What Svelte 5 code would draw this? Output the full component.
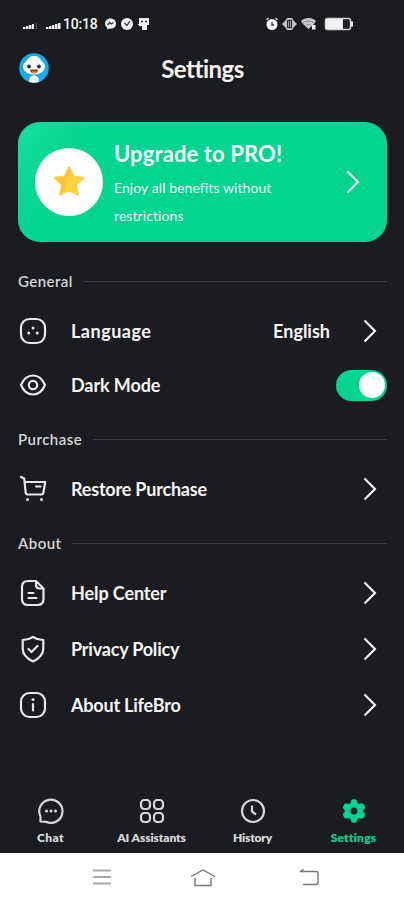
<script lang="ts">
  type Row = { label: string; icon: string; kind?: 'toggle'; value?: string };

  let darkMode = $state(true);
  let activeTab = $state('settings');

  const sections: { title: string; rows: Row[] }[] = [
    {
      title: 'General',
      rows: [
        { label: 'Language', icon: 'language', value: 'English' },
        { label: 'Dark Mode', icon: 'eye', kind: 'toggle' }
      ]
    },
    {
      title: 'Purchase',
      rows: [{ label: 'Restore Purchase', icon: 'cart' }]
    },
    {
      title: 'About',
      rows: [
        { label: 'Help Center', icon: 'document' },
        { label: 'Privacy Policy', icon: 'shield' },
        { label: 'About LifeBro', icon: 'info' }
      ]
    }
  ];

  const tabs = [
    { id: 'chat', label: 'Chat' },
    { id: 'assistants', label: 'AI Assistants' },
    { id: 'history', label: 'History' },
    { id: 'settings', label: 'Settings' }
  ];
</script>

{#snippet chevron()}
  <svg class="chevron" viewBox="0 0 14 24" width="14" height="24">
    <path d="M1.5 1.5 12 12 1.5 22.5" />
  </svg>
{/snippet}

<div class="screen">
  <div class="status">
    <svg class="signal" viewBox="0 0 40 10" width="40" height="10">
      <path d="M1 7V5h2.500v2zM4 7V4h2.500v3zM7 7V3h2.500v4zM10 7V2h2v5z" />
      <path class="dim" d="M14 7V1h1v6z" />
      <path d="M24 7V5h2.500v2zM27 7V4h2.500v3zM30 7V3h2.500v4zM33 7V2h2.500v5zM36 7V1h2.500v6z" />
    </svg>
    <span class="clock">10:18</span>
    <svg class="notices" viewBox="0 0 46 14" width="46" height="14">
      <path d="M6.500 1.500C3 1.500 1 4 1 6.500c0 2 .8 3.200 2 4v2l2-1c4.500.8 7-1.700 7-5 0-2.700-2.300-5-5.500-5z" />
      <path class="cut" d="m3.500 8 2.300-2.500 1.700 1.500 2-1.500" />
      <circle cx="23" cy="7" r="6" />
      <path class="cut" d="M20.500 6 23 8.500 26 4" />
      <path d="M35 1h10v7h-2v5h-5V9h-3z" />
      <path d="M33.500 7h3v3z" />
      <path class="cut" d="M37 4.500h2M41 4.500h2" />
    </svg>
    <svg class="system" viewBox="0 0 90 16" width="90" height="16">
      <circle cx="7" cy="8.500" r="5.500" />
      <path class="line" d="m1.500 4 2-2M12.500 4l-2-2" />
      <path class="cut" d="M7 6v3h2" />
      <path class="grey" d="M17 8l3-3 2-3h5l2 3 3 3-3 3-2 3h-5l-2-3z" />
      <path class="cut" d="M22.500 4.500v7h4v-7zM24.500 5v6" />
      <path class="grey" d="M36 5c4-4 11-4 15 0l-2 3-5.500 5L38 8z" />
      <path class="cut thin" d="M38 7c3-2.500 8-2.500 11 0M41 9.500c2-1.500 3.500-1.500 5 0" />
      <path d="M47 9h3.500v4.500H47z" />
      <rect class="line" x="60.500" y="2.500" width="25" height="11" rx="2" />
      <rect x="61" y="3" width="17" height="10" />
      <path d="M86 5.500h2v5h-2z" />
    </svg>
  </div>

  <header class="header">
    <svg class="avatar" viewBox="0 0 30 30" width="30" height="30">
      <circle cx="15" cy="15" r="14.800" fill="#16aaf0" />
      <path d="M15 3c-4 0-6 2-7.500 5C5 10 4 11.500 4 13.500 4 18 9 21.500 15 21.500S26 18 26 13.500c0-2-1-3.500-3.500-5.500C21 5 19 3 15 3z" fill="#fff" />
      <path d="M10 29c0-4 1.500-6.500 5-6.500s5 2.500 5 6.500c-3 1-7 1-10 0z" fill="#fff" />
      <path d="M12 25.500c2 1 4 1 6 0" fill="none" stroke="#bce8fa" />
      <circle cx="10" cy="13.500" r="1.900" fill="#25323b" />
      <circle cx="20" cy="13.500" r="1.900" fill="#25323b" />
      <path d="M11 16.500h8c-.5 3-2 4-4 4s-3.500-1-4-4z" fill="#963522" />
      <path d="M12.500 18.500h5L16 20.300h-2z" fill="#ff9b28" />
    </svg>
    <h1>Settings</h1>
  </header>

  <main>
    <button class="promo">
      <span class="promo__badge">
        <svg viewBox="0 0 34 34" width="34" height="34">
          <path d="m17 2.500 4.300 9 10 1.300-7.300 7 2 10.200-9-5-9 5 2-10.200-7.300-7 10-1.300z" fill="#ffd143" stroke="#ffd143" stroke-width="2" stroke-linejoin="round" />
          <path d="m17 2 3 6-5 4-3 15-4 3 2-10.200-7.300-7 10-1.300z" fill="#ffc13c" />
        </svg>
      </span>
      <span class="promo__text">
        <strong>Upgrade to PRO!</strong>
        <span class="promo__line">Enjoy all benefits without</span>
        <span class="promo__line">restrictions</span>
      </span>
      {@render chevron()}
    </button>

    {#each sections as section}
      <section>
        <h2>{section.title}</h2>
        {#each section.rows as row}
          <div class="row" class:row--toggle={row.kind === 'toggle'}>
            <svg class="row__icon" viewBox="0 0 28 28" width="28" height="28">
              {#if row.icon === 'language'}
                <rect x="2" y="2" width="24" height="24" rx="8.500" />
                <path class="dots" d="M14 11v.1M9.800 16v.1M18.200 16v.1" />
              {:else if row.icon === 'eye'}
                <path d="M2 14C4.500 8 8.800 4.500 14 4.500S23.500 8 26 14c-2.500 6-6.800 9.500-12 9.500S4.500 20 2 14z" />
                <circle cx="14" cy="14" r="4.200" />
              {:else if row.icon === 'cart'}
                <path d="m2 2 3.200 1.500L6.700 18q.2 1.500 1.800 1.500h14q1.500 0 1.800-1.500L26.300 7H5.700M17 11.500h4.500" />
                <path class="dots" d="M8.500 24.500v.1M22.500 24.500v.1" />
              {:else if row.icon === 'document'}
                <path d="M17 2H9C5 2 3 4 3 8v12c0 4 2 6 6 6h9.500c4 0 6-2 6-6V9.500zM17 2v4c0 2.500 1 3.500 3.500 3.500h4M9.500 14h5M9.500 19h8" />
              {:else if row.icon === 'shield'}
                <path d="M14 1.800c2.500 1.700 6 2.700 10.300 3.200v8.500c0 6.500-4 10-10.300 13C7.700 23.500 3.700 20 3.700 13.500V5C8 4.500 11.500 3.500 14 1.800zM9.500 14l3 3 6-6" />
              {:else}
                <rect x="2" y="2" width="24" height="24" rx="8.500" />
                <path d="M14 13v6.500" />
                <path class="dots" d="M14 8.500v.1" />
              {/if}
            </svg>
            <span class="row__label row__label--{row.icon}">{row.label}</span>
            {#if row.kind === 'toggle'}
              <button
                class="toggle"
                class:toggle--on={darkMode}
                aria-label={row.label}
                onclick={() => (darkMode = !darkMode)}
              ><span></span></button>
            {:else}
              {#if row.value}<span class="row__value">{row.value}</span>{/if}
              {@render chevron()}
            {/if}
          </div>
        {/each}
      </section>
    {/each}
  </main>

  <nav class="tabs">
    {#each tabs as tab}
      <button class="tab tab--{tab.id}" class:tab--active={activeTab === tab.id} onclick={() => (activeTab = tab.id)}>
        <svg viewBox="0 0 28 28" width="28" height="28">
          {#if tab.id === 'chat'}
            <path d="M3.500 24.500V19.500A11.600 11.600 0 1 1 9 24.800z" />
            <path class="dots" d="M9.500 14v.1M14 14v.1M18.500 14v.1" />
          {:else if tab.id === 'assistants'}
            <rect x="3" y="3" width="9" height="9" rx="3.200" />
            <rect x="16" y="3" width="9" height="9" rx="3.200" />
            <rect x="3" y="16" width="9" height="9" rx="3.200" />
            <rect x="16" y="16" width="9" height="9" rx="3.200" />
          {:else if tab.id === 'history'}
            <circle cx="14" cy="14" r="11" />
            <path d="M13 8.500v6l4 3" />
          {:else}
            <path
              class="gear"
              fill-rule="evenodd"
              d="M11 4Q11.300 2.300 13 2.300h2Q16.700 2.300 17 4l.5 2 1.700 1 2-.6q1.700-.5 2.600 1l1 1.800q.9 1.500-.4 2.700L23 13.200v1.600l1.400 1.300q1.300 1.200.4 2.700l-1 1.800q-.9 1.500-2.600 1l-2-.6-1.700 1-.5 2q-.3 1.700-2 1.700h-2q-1.700 0-2-1.700l-.5-2-1.700-1-2 .6q-1.700.5-2.600-1l-1-1.800q-.9-1.500.4-2.700L5 14.800v-1.600l-1.400-1.300q-1.300-1.200-.4-2.700l1-1.800q.9-1.500 2.600-1l2 .6 1.700-1zM14 10.500a3.500 3.500 0 1 0 0 7 3.500 3.500 0 0 0 0-7z"
            />
          {/if}
        </svg>
        <span>{tab.label}</span>
      </button>
    {/each}
  </nav>

  <div class="system-nav">
    <svg viewBox="0 0 20 20" width="20" height="20"><path class="menu" d="M1 2.500h18M1 9h18M1 15.500h18" /></svg>
    <svg class="home" viewBox="0 0 26 20" width="26" height="20"><path d="M1 8.500 13 2l12 6.500M5 10v7.500h16V10" /></svg>
    <svg viewBox="0 0 22 20" width="22" height="20"><path d="M5.500 1 3 3.500h15q2 0 2 2v8.500q0 2.500-2 2.500H5M1.500 3.500H5" /></svg>
  </div>
</div>

<style>
  :global(body) {
    background: #1b1c20;
  }

  .screen {
    box-sizing: border-box;
    width: 100%;
    height: 900px;
    display: flex;
    flex-direction: column;
    overflow: hidden;
    background: #1b1c20;
    color: #f5f5f5;
    font-family: Lato, "Liberation Sans", sans-serif;
  }

  button {
    border: 0;
    padding: 0;
    background: none;
    color: inherit;
    font: inherit;
  }

  svg {
    display: block;
    flex: none;
  }

  .status {
    display: flex;
    align-items: center;
    height: 48px;
    padding-left: 22px;
    box-sizing: border-box;
    fill: #f2f2f2;
  }

  .signal {
    margin-top: 5px;
  }

  .dim {
    fill: #55565a;
  }

  .clock {
    width: 35px;
    margin-left: 1px;
    font: 500 14px Roboto, sans-serif;
    letter-spacing: -0.2px;
  }

  .notices {
    margin-left: 6px;
  }

  .system {
    margin-left: 115px;
  }

  .cut {
    fill: none;
    stroke: #35363a;
    stroke-width: 1.3;
  }

  .thin {
    stroke: #77787b;
    stroke-width: 0.8;
  }

  .line {
    fill: none;
    stroke: #d0d0d0;
    stroke-width: 1.5;
  }

  .grey {
    fill: #c8c8c8;
  }

  .header {
    display: grid;
    grid-template-columns: 30px 1fr 30px;
    align-items: center;
    height: 41px;
    padding: 0 18px 0 19px;
  }

  .avatar {
    margin-top: -2px;
  }

  h1 {
    margin: 0;
    font-size: 24px;
    line-height: 30px;
    font-weight: 700;
    text-align: center;
    letter-spacing: -0.5px;
  }

  main {
    flex: 1;
    padding: 33px 17px 0 18px;
  }

  .promo {
    display: flex;
    align-items: center;
    box-sizing: border-box;
    width: 100%;
    height: 120px;
    padding: 0 27px 0 17px;
    border-radius: 22px;
    background: linear-gradient(125deg, #16de9d 0%, #03d590 18%);
    text-align: left;
  }

  .promo__badge {
    display: grid;
    place-items: center;
    flex: none;
    width: 68px;
    height: 68px;
    border-radius: 50%;
    background: #fff;
  }

  .promo__text {
    flex: 1;
    display: flex;
    flex-direction: column;
    padding-top: 6px;
    margin-left: 11px;
    white-space: nowrap;
  }

  .promo strong {
    margin-bottom: 6px;
    font-size: 22px;
    line-height: 28px;
    letter-spacing: 0.12px;
  }

  .promo__line {
    font-size: 14px;
    line-height: 28px;
    letter-spacing: 0.08px;
  }

  .chevron {
    fill: none;
    stroke: #fff;
    stroke-width: 2.1;
  }

  section {
    padding-top: 18px;
  }

  .promo + section {
    padding-top: 29px;
  }

  section:nth-of-type(3) {
    padding-top: 16px;
  }

  h2 {
    display: flex;
    align-items: center;
    gap: 11px;
    margin: 0 0 12px;
    height: 20px;
    color: #d5d5d6;
    font-size: 15px;
    line-height: 20px;
    font-weight: 600;
    letter-spacing: 0.45px;
  }

  h2::after {
    content: "";
    flex: 1;
    height: 1px;
    background: #3a3b3f;
  }

  .row {
    display: flex;
    align-items: center;
    height: 56px;
    padding: 0 10px 0 1px;
  }

  .row--toggle {
    height: 52px;
    padding-right: 0;
  }

  .row__icon {
    fill: none;
    stroke: #e8e8e8;
    stroke-width: 2.2;
    stroke-linecap: round;
    stroke-linejoin: round;
  }

  .dots {
    stroke-width: 3;
    stroke-linecap: round;
  }

  .row__label {
    flex: 1;
    margin-left: 24px;
    font-size: 18px;
    font-weight: 700;
    letter-spacing: -0.2px;
  }

  .row__label--language {
    letter-spacing: 0.5px;
  }

  .row__label--eye,
  .row__label--document {
    letter-spacing: -0.1px;
  }

  .row__value {
    margin-right: 33px;
    font-size: 18px;
    font-weight: 700;
  }

  .toggle {
    width: 51px;
    height: 31px;
    padding: 2px;
    border-radius: 16px;
    background: #45474d;
  }

  .toggle span {
    display: block;
    width: 26px;
    height: 26px;
    border-radius: 50%;
    background: #fff;
  }

  .toggle--on {
    background: #03d590;
  }

  .toggle--on span {
    margin-left: 21px;
  }

  .tabs {
    display: grid;
    grid-template-columns: repeat(4, 101px);
    height: 56px;
    flex: none;
  }

  .tab {
    display: flex;
    flex-direction: column;
    align-items: center;
    color: #d7d7d7;
    font-size: 12px;
    line-height: 18px;
    font-weight: 800;
  }

  .tab svg {
    fill: none;
    stroke: currentColor;
    stroke-width: 2.2;
    stroke-linejoin: round;
  }

  .tab span {
    margin-top: 4px;
  }

  .tab--chat {
    letter-spacing: 0.4px;
  }

  .tab--assistants {
    letter-spacing: -0.1px;
  }

  .tab--history {
    letter-spacing: -0.2px;
  }

  .tab--settings {
    letter-spacing: 0.2px;
  }

  .tab .gear {
    fill: currentColor;
    stroke: none;
  }

  .tab--active {
    color: #03d590;
  }

  .system-nav {
    display: flex;
    align-items: center;
    box-sizing: border-box;
    height: 47px;
    flex: none;
    padding: 2px 84px 0 92px;
    justify-content: space-between;
    background: #fff;
  }

  .system-nav svg {
    fill: none;
    stroke: #77777a;
    stroke-width: 1.4;
  }

  .system-nav .home {
    margin-right: 4px;
  }

  .system-nav .menu {
    stroke: #aaa;
    stroke-width: 2;
  }
</style>
